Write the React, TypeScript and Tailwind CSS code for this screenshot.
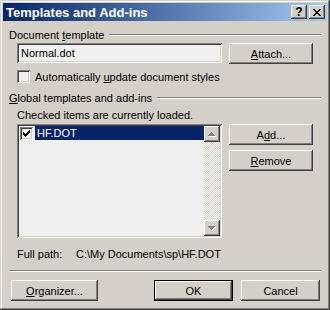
const raised =
  'shadow-[inset_-1px_-1px_#404040,inset_1px_1px_#ffffff,inset_-2px_-2px_#808080,inset_2px_2px_#d4d0c8]'
const sunken =
  'shadow-[inset_1px_1px_#808080,inset_-1px_-1px_#ffffff,inset_2px_2px_#404040,inset_-2px_-2px_#d4d0c8]'

function Button({
  children,
  className = '',
  isDefault = false,
}: {
  children: React.ReactNode
  className?: string
  isDefault?: boolean
}) {
  return (
    <div
      className={`flex items-center justify-center bg-[#d4d0c8] ${
        isDefault
          ? 'shadow-[inset_0_0_0_1px_#000000,inset_-2px_-2px_#404040,inset_2px_2px_#ffffff,inset_-3px_-3px_#808080]'
          : raised
      } ${className}`}
    >
      {children}
    </div>
  )
}

function GroupLabel({ children }: { children: React.ReactNode }) {
  return (
    <div className="flex items-center gap-[5px] h-[12px]">
      <span className="whitespace-nowrap">{children}</span>
      <div className="flex-1 border-t border-b border-t-[#808080] border-b-white" />
    </div>
  )
}

function Check({ checked = false }: { checked?: boolean }) {
  return (
    <div className={`w-[13px] h-[13px] bg-[#f0f0f0] ${sunken} flex items-center justify-center shrink-0`}>
      {checked && (
        <svg width="7" height="7" viewBox="0 0 7 7" shapeRendering="crispEdges">
          <path
            d="M0 2h1v3h-1zM1 3h1v3h-1zM2 4h1v3h-1zM3 3h1v3h-1zM4 2h1v3h-1zM5 1h1v3h-1zM6 0h1v3h-1z"
            fill="#000"
          />
        </svg>
      )}
    </div>
  )
}

function Arrow({ up }: { up: boolean }) {
  return (
    <div className={`w-[16px] h-[16px] bg-[#d4d0c8] ${raised} flex items-center justify-center`}>
      <svg width="8" height="5" viewBox="0 0 8 5" shapeRendering="crispEdges">
        {up ? (
          <>
            <path d="M4 1h1v1h1v1h1v1h1v1h-7v-1h1v-1h1v-1h1z" fill="#ffffff" />
            <path d="M3 0h1v1h1v1h1v1h1v1h-7v-1h1v-1h1z" fill="#808080" />
          </>
        ) : (
          <>
            <path d="M1 1h7v1h-1v1h-1v1h-1v1h-1v-1h-1v-1h-1v-1h-1z" fill="#ffffff" />
            <path d="M0 0h7v1h-1v1h-1v1h-1v1h-1v-1h-1v-1h-1v-1h-1z" fill="#808080" />
          </>
        )}
      </svg>
    </div>
  )
}

export default function App() {
  return (
    <div className="w-[330px] h-[310px] bg-[#d4d0c8] p-[3px] flex flex-col font-['Liberation_Sans',Arial,sans-serif] text-[11px] leading-[12px] text-black shadow-[inset_-1px_-1px_#404040,inset_1px_1px_#d4d0c8,inset_-2px_-2px_#808080,inset_2px_2px_#ffffff]">
      <div className="h-[18px] flex items-center bg-gradient-to-r from-[#0a246a] to-[#a6caf0] pl-[3px] pr-[2px]">
        <span className="text-white font-bold text-[13px] leading-none">Templates and Add-ins</span>
        <div className="ml-auto flex gap-[2px]">
          <Button className="w-[16px] h-[14px]">
            <span className="font-bold text-[12px] leading-none">?</span>
          </Button>
          <Button className="w-[16px] h-[14px]">
            <svg width="8" height="7" viewBox="0 0 8 7" shapeRendering="crispEdges">
              <path
                d="M0 0h2v1h-2zM6 0h2v1h-2zM1 1h2v1h-2zM5 1h2v1h-2zM2 2h4v1h-4zM3 3h2v1h-2zM2 4h4v1h-4zM1 5h2v1h-2zM5 5h2v1h-2zM0 6h2v1h-2zM6 6h2v1h-2z"
                fill="#000"
              />
            </svg>
          </Button>
        </div>
      </div>

      <div className="flex-1 flex flex-col px-[6px]">
        <div className="mt-[8px]">
          <GroupLabel>
            Document <u>t</u>emplate
          </GroupLabel>
        </div>
        <div className="mt-[2px] pl-[8px] flex gap-[7px]">
          <div className={`w-[205px] h-[20px] bg-[#f0f0f0] ${sunken} flex items-center pl-[4px]`}>
            Normal.dot
          </div>
          <Button className="w-[84px] h-[21px]">
            <span>
              <u>A</u>ttach...
            </span>
          </Button>
        </div>
        <div className="mt-[6px] pl-[8px] flex items-center gap-[5px]">
          <Check />
          <span>
            Automatically <u>u</u>pdate document styles
          </span>
        </div>

        <div className="mt-[9px]">
          <GroupLabel>
            <u>G</u>lobal templates and add-ins
          </GroupLabel>
        </div>
        <div className="mt-[5px] pl-[8px]">Checked items are currently loaded.</div>
        <div className="mt-[3px] pl-[8px] flex gap-[7px]">
          <div className={`w-[205px] h-[114px] bg-[#f0f0f0] ${sunken} p-[2px] flex`}>
            <div className="flex-1 flex flex-col">
              <div className="h-[14px] flex items-center">
                <div className="ml-[1px]">
                  <Check checked />
                </div>
                <div className="ml-[2px] flex-1 h-[14px] bg-[#0a246a] text-white flex items-center pl-[2px]">
                  HF.DOT
                </div>
              </div>
            </div>
            <div className="w-[16px] flex flex-col bg-[repeating-conic-gradient(#d4d0c8_0_25%,#ffffff_0_50%)] bg-[length:2px_2px]">
              <Arrow up />
              <div className="flex-1" />
              <Arrow up={false} />
            </div>
          </div>
          <div className="flex flex-col gap-[5px]">
            <Button className="w-[84px] h-[21px]">
              <span>
                A<u>d</u>d...
              </span>
            </Button>
            <Button className="w-[84px] h-[21px]">
              <span>
                <u>R</u>emove
              </span>
            </Button>
          </div>
        </div>

        <div className="mt-[10px] pl-[8px] flex h-[12px]">
          <span className="w-[59px]">Full path:</span>
          <span>C:\My Documents\sp\HF.DOT</span>
        </div>

        <div className="mt-[10px] border-t border-b border-t-[#808080] border-b-white" />

        <div className="mt-[8px] flex">
          <Button className="ml-[2px] w-[87px] h-[21px]">
            <span>
              <u>O</u>rganizer...
            </span>
          </Button>
          <Button isDefault className="ml-auto w-[79px] h-[21px]">
            OK
          </Button>
          <Button className="ml-[8px] mr-[1px] w-[79px] h-[21px]">Cancel</Button>
        </div>
      </div>
    </div>
  )
}
